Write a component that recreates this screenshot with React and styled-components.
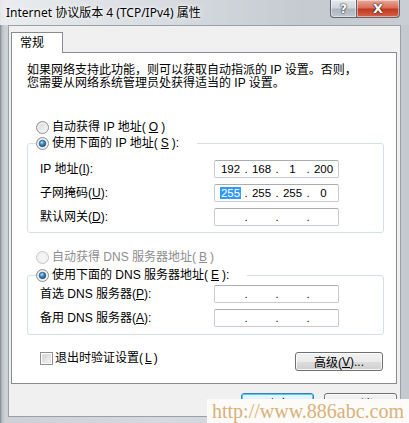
import styled, { createGlobalStyle } from 'styled-components';

const GlobalStyle = createGlobalStyle`
  html, body { margin: 0; padding: 0; background: #c9ced4; }
  body {
    font-family: "Liberation Sans", "Noto Sans CJK SC", sans-serif;
    font-size: 12px;
    color: #000;
    text-autospace: no-autospace;
  }
  * { box-sizing: border-box; }
`;

const Window = styled.div`
  position: relative;
  width: 409px;
  height: 423px;
  display: flex;
  flex-direction: column;
  overflow: hidden;
  background: linear-gradient(90deg, #7e848b 0, #b9bec4 2px, #cdd1d6 5px, #d6dadf 40%, #c4c9cf 100%);
`;

const TitleBar = styled.div`
  height: 25px;
  display: flex;
  align-items: flex-start;
  flex: none;
  background: linear-gradient(90deg, rgba(238, 240, 242, 0.9) 0, rgba(214, 218, 222, 0.6) 45%, rgba(190, 196, 202, 0.5) 75%, rgba(205, 210, 215, 0.6) 100%);
`;

const Title = styled.div`
  padding-left: 6px;
  line-height: 25px;
  font-family: "Noto Sans", "Noto Sans CJK SC", sans-serif;
  font-size: 12px;
  color: #000;
  text-shadow: 0 0 6px #fff, 0 0 3px #fff;
`;

const Captions = styled.div`
  margin-left: auto;
  margin-right: 9px;
  display: flex;
`;

const CaptionButton = styled.div`
  height: 18px;
  width: ${p => p.$width}px;
  display: flex;
  align-items: center;
  justify-content: center;
  font-family: "DejaVu Sans", sans-serif;
  font-weight: bold;
  color: #fff;
  border: 1px solid #5f6670;
  border-top: none;
  text-shadow: 0 0 2px #222, 0 0 1px #000;
  box-shadow: inset 0 0 0 1px rgba(255, 255, 255, 0.45);
`;

const HelpButton = styled(CaptionButton)`
  border-radius: 0 0 0 4px;
  font-size: 12px;
  background: linear-gradient(180deg, #e4e8ec 0, #cfd5dc 45%, #aeb6c0 55%, #c0c7cf 100%);
`;

const CloseButton = styled(CaptionButton)`
  border-left: none;
  border-radius: 0 0 4px 0;
  font-size: 13px;
  background: linear-gradient(180deg, #e9a99a 0, #d9705a 45%, #c1391f 55%, #d9634a 100%);
`;

const Client = styled.div`
  flex: 1;
  margin: 0 8px 6px;
  border: 1px solid #9ba0a6;
  background: #f0f0f0;
  padding: 6px 3px 0 2px;
  display: flex;
  flex-direction: column;
`;

const TabStrip = styled.div`
  height: 20px;
  display: flex;
`;

const Tab = styled.div`
  position: relative;
  z-index: 1;
  width: 52px;
  height: 21px;
  padding-left: 8px;
  line-height: 20px;
  background: #fff;
  border: 1px solid #898c95;
  border-bottom: none;
`;

const TabPage = styled.div`
  height: 332px;
  background: #fff;
  border: 1px solid #898c95;
  padding: 11px 12px 12px 15px;
  display: flex;
  flex-direction: column;
`;

const Description = styled.p`
  margin: 0;
  line-height: 13px;
  white-space: nowrap;
`;

const RadioRow = styled.label`
  display: flex;
  align-items: center;
  gap: 3px;
  height: 16px;
  line-height: 16px;
  margin-left: ${p => p.$indent ?? 9}px;
  margin-top: ${p => p.$top ?? 0}px;
  color: ${p => (p.$disabled ? '#8d8d8d' : '#000')};
  white-space: nowrap;
`;

const Group = styled.fieldset`
  margin: ${p => p.$top ?? 0}px 0 0;
  padding: ${p => p.$padTop}px 12px ${p => p.$padBottom}px;
  min-width: 0;
  border: 1px solid #d5dfe5;
  border-radius: 3px;
`;

const Legend = styled.legend`
  padding: 0 18px 0 0;
  margin-left: -4px;
  background: #fff;
`;

const Rows = styled.div`
  display: grid;
  grid-template-columns: 174px 125px;
  row-gap: 6px;
`;

const FieldLabel = styled.div`
  line-height: 18px;
  white-space: nowrap;
`;

const IpBox = styled.div`
  height: 18px;
  display: flex;
  align-items: center;
  padding-left: 3px;
  border: 1px solid #c7cbd1;
  border-top-color: #abadb3;
  border-radius: 2px;
  background: #fff;
  font-family: "Liberation Sans", sans-serif;
  font-size: 11.5px;
`;

const Octet = styled.span`
  width: 25px;
  text-align: center;
  line-height: 14px;
`;

const Selected = styled.span`
  background: #3399ff;
  color: #fff;
  padding: 0 1px;
`;

const Dot = styled.span`
  width: 6px;
  text-align: center;
  line-height: 14px;
`;

const CheckRow = styled.div`
  margin-top: 17px;
  padding-left: 13px;
  display: flex;
  justify-content: space-between;
  align-items: flex-start;
`;

const CheckLabel = styled.label`
  display: flex;
  align-items: center;
  gap: 2px;
  height: 12px;
  line-height: 12px;
  white-space: nowrap;
`;

const PushButton = styled.div`
  width: ${p => p.$width}px;
  height: ${p => p.$height}px;
  display: flex;
  align-items: center;
  justify-content: center;
  border: 1px solid ${p => (p.$default ? '#3c7fb1' : '#707070')};
  border-radius: 3px;
  box-shadow: inset 0 0 0 1px ${p => (p.$default ? '#48d0f7' : 'rgba(255,255,255,0.8)')};
  background: ${p => (p.$default
    ? 'linear-gradient(180deg, #eaf6fd 0, #d9f0fc 50%, #bee6fd 51%, #a7d9f5 100%)'
    : 'linear-gradient(180deg, #f2f2f2 0, #ebebeb 50%, #dddddd 51%, #cfcfcf 100%)')};
  white-space: nowrap;
`;

const AdvancedButton = styled(PushButton)`
  margin-right: 1px;
`;

const Footer = styled.div`
  margin-top: 9px;
  display: flex;
  justify-content: flex-end;
  gap: 10px;
`;

const Watermark = styled.div`
  position: absolute;
  right: 0;
  bottom: 0;
  width: 202px;
  height: 24px;
  padding-left: 5px;
  background: #fcfbf8;
  font-family: "Liberation Serif", serif;
  font-size: 20px;
  line-height: 25px;
  color: #d8b27c;
  white-space: nowrap;
`;

function RadioMark({ checked, disabled }) {
  const ring = disabled ? '#c4c4c4' : '#8e8f8f';
  return (
    <svg width="13" height="13" viewBox="0 0 13 13">
      <defs>
        <linearGradient id="radioFill" x1="0" y1="0" x2="1" y2="1">
          <stop offset="0" stopColor="#d6d6d6" />
          <stop offset="1" stopColor="#fafafa" />
        </linearGradient>
        <radialGradient id="radioDot" cx="0.4" cy="0.35" r="0.7">
          <stop offset="0" stopColor="#b7e3fb" />
          <stop offset="0.45" stopColor="#3d8bc6" />
          <stop offset="1" stopColor="#134a7c" />
        </radialGradient>
      </defs>
      <circle cx="6.5" cy="6.5" r="6" fill={disabled ? '#f4f4f4' : 'url(#radioFill)'} stroke={ring} />
      <circle cx="6.5" cy="6.5" r="4.5" fill="none" stroke={disabled ? '#eeeeee' : '#f4f4f4'} />
      {checked && <circle cx="6.5" cy="6.5" r="3.3" fill="url(#radioDot)" stroke="#1d4f7d" strokeWidth="0.6" />}
    </svg>
  );
}

function CheckMark() {
  return (
    <svg width="13" height="13" viewBox="0 0 13 13">
      <defs>
        <linearGradient id="checkFill" x1="0" y1="0" x2="1" y2="1">
          <stop offset="0" stopColor="#cfcfcf" />
          <stop offset="1" stopColor="#f7f7f7" />
        </linearGradient>
      </defs>
      <rect x="0.5" y="0.5" width="12" height="12" fill="#fff" stroke="#8e8f8f" />
      <rect x="2.5" y="2.5" width="8" height="8" fill="url(#checkFill)" stroke="#d8d8d8" strokeWidth="0.6" />
    </svg>
  );
}

function IpField({ values = ['', '', '', ''], selectFirst }) {
  return (
    <IpBox>
      {values.map((v, i) => (
        <>
          {i > 0 && <Dot key={`d${i}`}>.</Dot>}
          <Octet key={`o${i}`}>{i === 0 && selectFirst ? <Selected>{v}</Selected> : v}</Octet>
        </>
      ))}
    </IpBox>
  );
}

const ipRows = [
  { label: <>IP 地址(<u>I</u>):</>, values: ['192', '168', '1', '200'] },
  { label: <>子网掩码(<u>U</u>):</>, values: ['255', '255', '255', '0'], selectFirst: true },
  { label: <>默认网关(<u>D</u>):</> }
];

const dnsRows = [
  { label: <>首选 DNS 服务器(<u>P</u>):</> },
  { label: <>备用 DNS 服务器(<u>A</u>):</> }
];

export default function App() {
  return (
    <>
      <GlobalStyle />
      <Window>
        <TitleBar>
          <Title>Internet 协议版本 4 (TCP/IPv4) 属性</Title>
          <Captions>
            <HelpButton $width={27}>?</HelpButton>
            <CloseButton $width={43}>X</CloseButton>
          </Captions>
        </TitleBar>
        <Client>
          <TabStrip>
            <Tab>常规</Tab>
          </TabStrip>
          <TabPage>
            <Description>
              如果网络支持此功能，则可以获取自动指派的 IP 设置。否则，<br />
              您需要从网络系统管理员处获得适当的 IP 设置。
            </Description>
            <RadioRow $top={29}>
              <RadioMark />自动获得 IP 地址(<u>O</u>)
            </RadioRow>
            <Group $padTop={9} $padBottom={6}>
              <Legend>
                <RadioRow $indent={0}>
                  <RadioMark checked />使用下面的 IP 地址(<u>S</u>):
                </RadioRow>
              </Legend>
              <Rows>
                {ipRows.map((row, i) => (
                  <>
                    <FieldLabel key={`l${i}`}>{row.label}</FieldLabel>
                    <IpField key={`f${i}`} values={row.values} selectFirst={row.selectFirst} />
                  </>
                ))}
              </Rows>
            </Group>
            <RadioRow $top={16} $disabled>
              <RadioMark disabled />自动获得 DNS 服务器地址(<u>B</u>)
            </RadioRow>
            <Group $top={2} $padTop={2} $padBottom={7}>
              <Legend>
                <RadioRow $indent={0}>
                  <RadioMark checked />使用下面的 DNS 服务器地址(<u>E</u>):
                </RadioRow>
              </Legend>
              <Rows>
                {dnsRows.map((row, i) => (
                  <>
                    <FieldLabel key={`l${i}`}>{row.label}</FieldLabel>
                    <IpField key={`f${i}`} />
                  </>
                ))}
              </Rows>
            </Group>
            <CheckRow>
              <CheckLabel>
                <CheckMark />退出时验证设置(<u>L</u>)
              </CheckLabel>
              <AdvancedButton $width={88} $height={19}>高级(<u>V</u>)...</AdvancedButton>
            </CheckRow>
          </TabPage>
          <Footer>
            <PushButton $width={73} $height={21} $default>确定</PushButton>
            <PushButton $width={73} $height={21}>取消</PushButton>
          </Footer>
        </Client>
        <Watermark>http://www.886abc.com</Watermark>
      </Window>
    </>
  );
}
